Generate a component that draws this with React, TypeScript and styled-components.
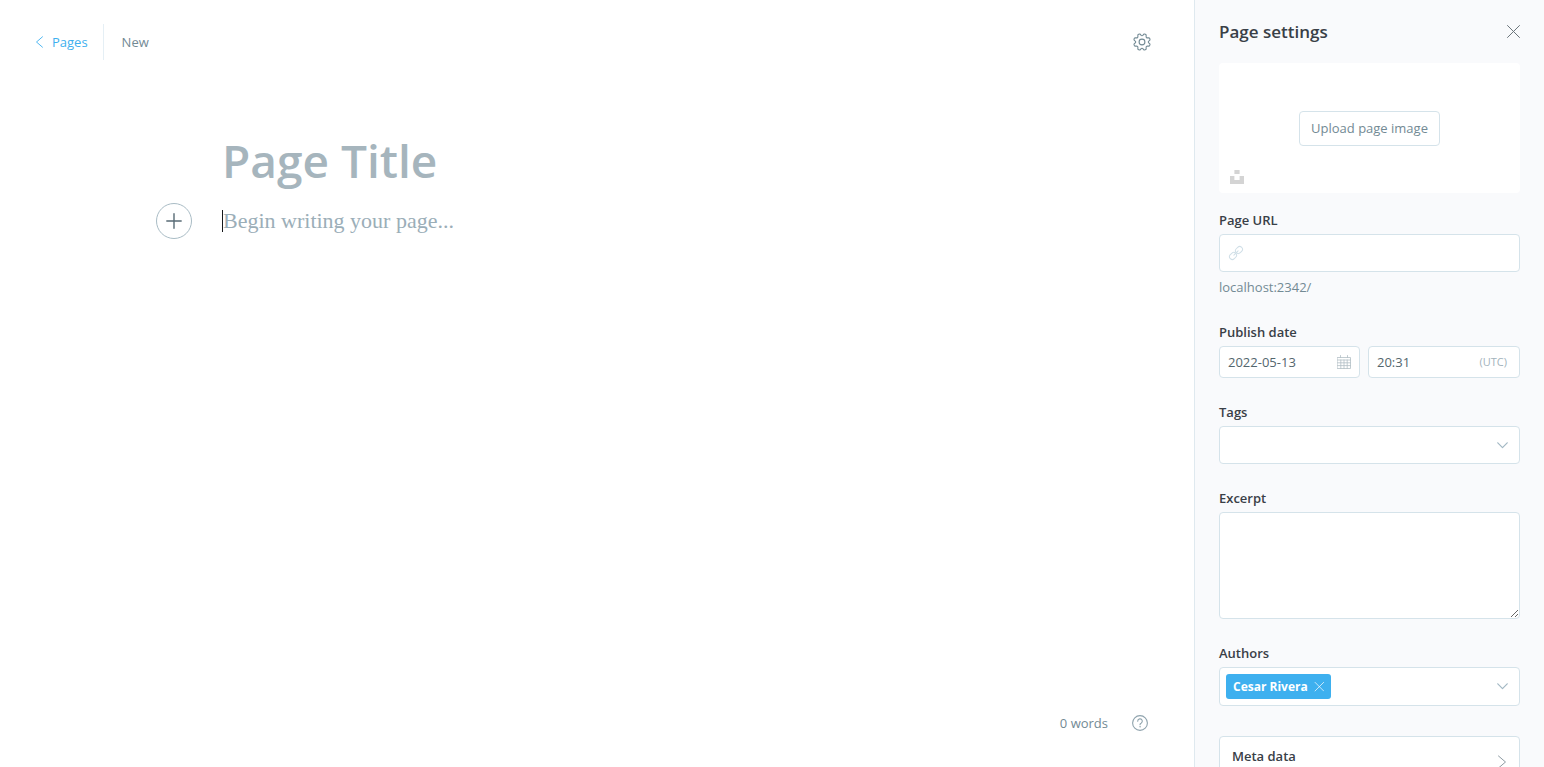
import React from 'react';
import styled, { createGlobalStyle } from 'styled-components';

const sans = `'Segoe UI', 'Open Sans', 'Noto Sans', sans-serif`;
const serif = `Georgia, 'Liberation Serif', serif`;

const GlobalStyle = createGlobalStyle`
  *, *::before, *::after { box-sizing: border-box; }
  body { margin: 0; background: #fff; color: #394047; font-family: ${sans}; font-size: 13px; line-height: 20px; }
  button, input, select, textarea { font: inherit; color: inherit; margin: 0; }
  button { cursor: pointer; }
`;

const Layout = styled.div`
  display: grid;
  grid-template-columns: minmax(0, 1fr) 350px;
  height: 100vh;
`;

const Editor = styled.main`
  display: flex;
  flex-direction: column;
  min-height: 0;
`;

const TopBar = styled.header`
  display: flex;
  align-items: center;
  justify-content: space-between;
  padding: 24px 43px 24px 35px;
`;

const Breadcrumb = styled.nav`
  display: flex;
  align-items: center;
  height: 36px;
`;

const BackLink = styled.a`
  display: flex;
  align-items: center;
  gap: 8px;
  height: 36px;
  padding-right: 15px;
  border-right: 1px solid #e5eff5;
  color: #3eb0ef;
  text-decoration: none;
`;

const Status = styled.span`
  padding-left: 18px;
  color: #738a94;
`;

const IconButton = styled.button<{ $tone?: string }>`
  display: flex;
  align-items: center;
  justify-content: center;
  padding: 0;
  border: 0;
  background: none;
  color: ${(p) => p.$tone ?? '#738a94'};
`;

const Canvas = styled.section`
  flex: 1;
  display: grid;
  grid-template-columns: 36px minmax(0, 750px) 36px;
  column-gap: 30px;
  row-gap: 11px;
  justify-content: center;
  align-content: start;
  padding-top: 44px;
`;

const TitleInput = styled.input`
  grid-column: 2;
  width: 100%;
  height: 64px;
  padding: 0;
  border: 0;
  outline: 0;
  background: none;
  font-size: 46px;
  font-weight: 600;
  line-height: 64px;
  &::placeholder { color: #a6b5bd; opacity: 1; }
`;

const PlusButton = styled(IconButton)`
  grid-column: 1;
  width: 36px;
  height: 36px;
  border: 1px solid #a9bcc5;
  border-radius: 50%;
  color: #586b75;
`;

const BodyRow = styled.div`
  grid-column: 2;
  display: flex;
  align-items: center;
`;

const Caret = styled.span`
  width: 1px;
  height: 22px;
  background: #15171a;
`;

const BodyInput = styled.textarea`
  flex: 1;
  height: 32px;
  padding: 0;
  border: 0;
  outline: 0;
  resize: none;
  overflow: hidden;
  background: none;
  font-family: ${serif};
  font-size: 22px;
  line-height: 32px;
  &::placeholder { color: #9baeb8; opacity: 1; }
`;

const Footer = styled.footer`
  display: flex;
  align-items: center;
  justify-content: flex-end;
  gap: 24px;
  padding: 0 46px 34px;
  color: #738a94;
`;

const Panel = styled.aside`
  min-height: 0;
  overflow: hidden auto;
  scrollbar-width: none;
  padding: 0 24px 24px;
  border-left: 1px solid #dfe9ef;
  background: #f9fafc;
`;

const PanelHeader = styled.div`
  display: flex;
  align-items: center;
  justify-content: space-between;
  height: 63px;
`;

const PanelTitle = styled.h1`
  margin: 0;
  font-size: 17px;
  font-weight: 600;
  line-height: 24px;
`;

const ImageDrop = styled.div`
  display: grid;
  grid-template-rows: 1fr auto 1fr;
  height: 130px;
  padding: 9px;
  border-radius: 4px;
  background: #fff;
`;

const UploadButton = styled.button`
  grid-row: 2;
  justify-self: center;
  height: 35px;
  padding: 0 11px;
  border: 1px solid #d5e3ea;
  border-radius: 4px;
  background: #fff;
  color: #738a94;
`;

const UnsplashButton = styled(IconButton)`
  grid-row: 3;
  place-self: end start;
  padding-left: 2px;
`;

const Form = styled.form`
  display: flex;
  flex-direction: column;
  gap: 24px;
  padding-top: 17px;
`;

const Field = styled.div`
  display: flex;
  flex-direction: column;
  gap: 4px;
  min-width: 0;
`;

const Label = styled.label`
  font-weight: 600;
`;

const Hint = styled.p`
  margin: 0;
  padding: 1px 0;
  color: #738a94;
`;

const DateRow = styled.div`
  display: grid;
  grid-template-columns: 141fr 152fr;
  gap: 8px;
`;

const Control = styled.div<{ $height: number }>`
  display: flex;
  align-items: center;
  gap: 8px;
  height: ${(p) => p.$height}px;
  padding: 0 8px;
  border: 1px solid #d5e3ea;
  border-radius: 4px;
  background: #fff;
`;

const TextInput = styled.input`
  flex: 1;
  width: 100%;
  min-width: 0;
  padding: 0;
  border: 0;
  outline: 0;
  background: none;
  color: #54666d;
`;

const Zone = styled.span`
  padding-right: 4px;
  color: #a3b3bc;
  font-size: 11px;
`;

const SelectWrap = styled(Control)`
  gap: 0;
  padding: 0 11px 0 6px;
`;

const Select = styled.select`
  flex: 1;
  min-width: 0;
  height: 100%;
  border: 0;
  outline: 0;
  appearance: none;
  background: none;
`;

const TextArea = styled.textarea`
  display: block;
  width: 100%;
  height: 107px;
  padding: 8px;
  border: 1px solid #d5e3ea;
  border-radius: 4px;
  outline: 0;
  background: #fff;
  resize: vertical;
`;

const Chip = styled.button`
  display: flex;
  align-items: center;
  gap: 6px;
  height: 25px;
  padding: 0 7px;
  border: 0;
  border-radius: 3px;
  background: #3eb0ef;
  color: #fff;
  font-size: 12px;
  font-weight: 700;
`;

const MetaCard = styled.button`
  display: flex;
  justify-content: space-between;
  align-items: center;
  height: 52px;
  margin-top: 6px;
  padding: 0 12px;
  border: 1px solid #d5e3ea;
  border-radius: 4px;
  background: #fff;
  text-align: left;
`;

const MetaTitle = styled.span`
  align-self: flex-start;
  padding-top: 9px;
  font-weight: 600;
`;

const Icon = styled.svg`
  display: block;
  flex: none;
  fill: none;
  stroke: currentColor;
  stroke-linecap: round;
  stroke-linejoin: round;
`;

const Chevron = () => (
  <Icon width="11" height="7" viewBox="0 0 11 7" color="#a3b8c4" aria-hidden="true">
    <path d="M.8.8 5.5 5.6 10.2.8" strokeWidth="1.2" />
  </Icon>
);

const Cross = ({ size, width }: { size: number; width: number }) => (
  <Icon width={size} height={size} viewBox="0 0 14 14" aria-hidden="true">
    <path d="M1.5 .5l12 12M13.5 .5l-12 12" strokeWidth={width} />
  </Icon>
);

// Cog outline: eight rounded teeth joined by shallow concave arcs.
const cogPath = (() => {
  const at = (r: number, deg: number) => {
    const a = (deg * Math.PI) / 180;
    return `${(9 + r * Math.cos(a)).toFixed(2)} ${(9 + r * Math.sin(a)).toFixed(2)}`;
  };
  let d = `M${at(8.3, 15)}`;
  for (let i = 0; i < 8; i++) {
    const c = 22.5 + i * 45;
    d += `Q${at(8.8, c)} ${at(8.3, c + 7.5)}L${at(7.1, c + 13)}Q${at(5.6, c + 22.5)} ${at(7.1, c + 32)}L${at(8.3, c + 37.5)}`;
  }
  return `${d}Z`;
})();

export default function App() {
  return (
    <>
      <GlobalStyle />
      <Layout>
        <Editor>
          <TopBar>
            <Breadcrumb aria-label="Breadcrumb">
              <BackLink href="#pages">
                <Icon width="9" height="12" viewBox="0 0 9 12" aria-hidden="true">
                  <path d="M7.5.8 1.5 6l6 5.2" strokeWidth=".9" />
                </Icon>
                Pages
              </BackLink>
              <Status>New</Status>
            </Breadcrumb>
            <IconButton type="button" aria-label="Settings">
              <Icon width="18" height="18" viewBox="0 0 18 18" aria-hidden="true">
                <path d={cogPath} strokeWidth="1.1" />
                <circle cx="9" cy="9" r="2.9" strokeWidth="1.1" />
              </Icon>
            </IconButton>
          </TopBar>

          <Canvas>
            <TitleInput aria-label="Page title" placeholder="Page Title" />
            <PlusButton type="button" aria-label="Add a card">
              <Icon width="16" height="16" viewBox="0 0 16 16" aria-hidden="true">
                <path d="M8 .8v14.4M.8 8h14.4" strokeWidth="1.4" />
              </Icon>
            </PlusButton>
            <BodyRow>
              <Caret />
              <BodyInput rows={1} aria-label="Page content" placeholder="Begin writing your page..." />
            </BodyRow>
          </Canvas>

          <Footer>
            <span>0 words</span>
            <IconButton type="button" aria-label="Help" $tone="#8fa3ad">
              <Icon width="16" height="16" viewBox="0 0 16 16" aria-hidden="true">
                <circle cx="8" cy="8" r="7.4" strokeWidth="1.1" />
                <path d="M5.7 6.2a2.3 2.3 0 1 1 3.4 2c-.8.4-1.1.8-1.1 1.5" strokeWidth="1.1" />
                <circle cx="8" cy="11.8" r=".4" fill="currentColor" strokeWidth=".5" />
              </Icon>
            </IconButton>
          </Footer>
        </Editor>

        <Panel>
          <PanelHeader>
            <PanelTitle>Page settings</PanelTitle>
            <IconButton type="button" aria-label="Close" $tone="#6b757b">
              <Cross size={14} width={1} />
            </IconButton>
          </PanelHeader>

          <ImageDrop>
            <UploadButton type="button">Upload page image</UploadButton>
            <UnsplashButton type="button" aria-label="Unsplash" $tone="#d4d4d4">
              <svg width="14" height="14" viewBox="0 0 14 14" fill="currentColor" aria-hidden="true">
                <path d="M4.4 0h5.2v3.9H4.4zM9.6 6.1H14V14H0V6.1h4.4V10h5.2z" />
              </svg>
            </UnsplashButton>
          </ImageDrop>

          <Form>
            <Field>
              <Label htmlFor="url">Page URL</Label>
              <Control $height={38}>
                <Icon width="16" height="16" viewBox="0 0 16 16" color="#d0dfe7" aria-hidden="true">
                  <g transform="rotate(-45 8 8)" strokeWidth="1">
                    <rect x="0" y="5.2" width="7.6" height="5.6" rx="2.8" />
                    <rect x="8.4" y="5.2" width="7.6" height="5.6" rx="2.8" />
                    <path d="M5 8h6" />
                  </g>
                </Icon>
                <TextInput id="url" type="text" />
              </Control>
              <Hint>localhost:2342/</Hint>
            </Field>

            <Field>
              <Label htmlFor="date">Publish date</Label>
              <DateRow>
                <Control $height={32}>
                  <TextInput id="date" type="text" defaultValue="2022-05-13" />
                  <Icon width="14" height="14" viewBox="0 0 14 14" color="#b3bfc5" aria-hidden="true">
                    <path d="M.5 2.5h13v11H.5zM.5 5h13M.5 7.8h13M.5 10.6h13M3.8 5v8.5M7 5v8.5M10.2 5v8.5M3.5.5v2M10.5.5v2" strokeWidth=".8" />
                  </Icon>
                </Control>
                <Control $height={32}>
                  <TextInput type="text" aria-label="Publish time" defaultValue="20:31" />
                  <Zone>(UTC)</Zone>
                </Control>
              </DateRow>
            </Field>

            <Field>
              <Label htmlFor="tags">Tags</Label>
              <SelectWrap $height={38}>
                <Select id="tags" />
                <Chevron />
              </SelectWrap>
            </Field>

            <Field>
              <Label htmlFor="excerpt">Excerpt</Label>
              <TextArea id="excerpt" />
            </Field>

            <Field>
              <Label htmlFor="authors">Authors</Label>
              <SelectWrap $height={39}>
                <Chip type="button" aria-label="Remove Cesar Rivera">
                  Cesar Rivera
                  <Cross size={10} width={1} />
                </Chip>
                <Select id="authors" />
                <Chevron />
              </SelectWrap>
            </Field>

            <MetaCard type="button">
              <MetaTitle>Meta data</MetaTitle>
              <Icon width="10" height="14" viewBox="0 0 10 14" color="#8d9aa2" aria-hidden="true">
                <path d="M1.5 1l7 6-7 6" strokeWidth="1" />
              </Icon>
            </MetaCard>
          </Form>
        </Panel>
      </Layout>
    </>
  );
}
